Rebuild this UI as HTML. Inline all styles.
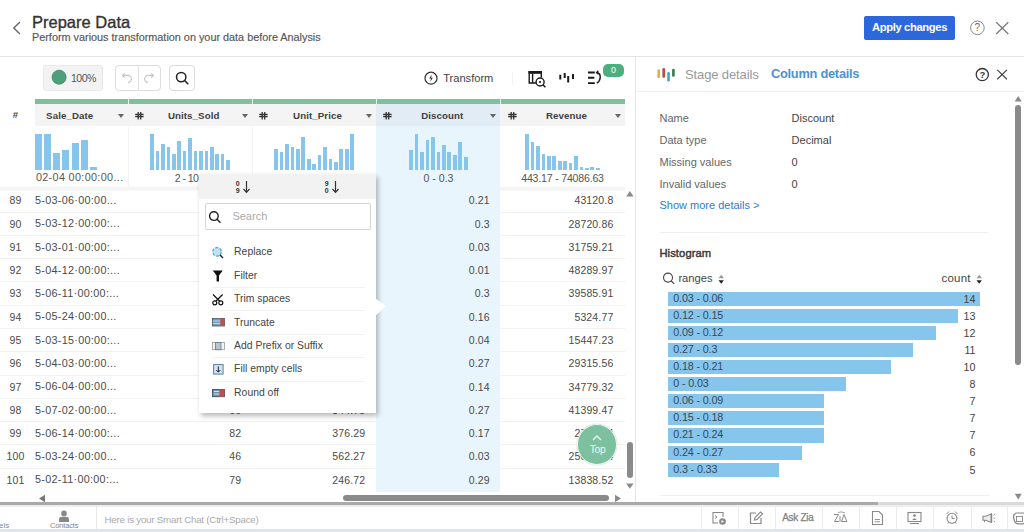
<!DOCTYPE html>
<html><head><meta charset="utf-8"><title>Prepare Data</title>
<style>
html,body{margin:0;padding:0;}
body{width:1024px;height:532px;overflow:hidden;position:relative;background:#fff;font-family:"Liberation Sans",sans-serif;}
.t{position:absolute;white-space:nowrap;}
.r{position:absolute;}
svg.r{overflow:visible;}
</style></head><body>

<div class="r" style="left:0.00px;top:56.00px;width:1024.00px;height:1.00px;background:#e4e4e4;"></div>
<svg class="r" style="left:0.00px;top:0.00px;" width="40" height="56" viewBox="0 0 40 56"><polyline points="19.5,22.5 13.8,28 19.5,33.5" fill="none" stroke="#666" stroke-width="1.4" stroke-linecap="round" stroke-linejoin="round"/></svg>
<div class="t" style="left:32.00px;top:13.78px;font-size:16.5px;line-height:16.5px;color:#333;font-weight:normal;-webkit-text-stroke:0.35px #333;">Prepare Data</div>
<div class="t" style="left:32.00px;top:32.32px;font-size:10.85px;line-height:10.85px;color:#555;font-weight:normal;-webkit-text-stroke:0.15px #555;">Perform various transformation on your data before Analysis</div>
<div class="r" style="left:864.00px;top:16.00px;width:91.00px;height:23.50px;background:#2d67dc;border-radius:2px;"></div>
<div class="t" style="left:849.50px;width:120px;text-align:center;top:21.92px;font-size:11.2px;line-height:11.2px;color:#fff;font-weight:bold;letter-spacing:-0.35px;">Apply changes</div>
<svg class="r" style="left:960.00px;top:10.00px;" width="60" height="36" viewBox="0 0 60 36"><circle cx="17.4" cy="17.8" r="6.8" fill="none" stroke="#888" stroke-width="1"/><text x="17.4" y="21.4" font-size="10" text-anchor="middle" fill="#666" font-family="Liberation Sans">?</text><path d="M36.2,12.2 L48.3,24 M48.3,12.2 L36.2,24" stroke="#777" stroke-width="1.2"/></svg>
<div class="r" style="left:43.00px;top:65.00px;width:60.00px;height:26.00px;background:#f3f3f3;border:1px solid #e9e9e9;border-radius:3px;box-sizing:border-box;"></div>
<svg class="r" style="left:50.00px;top:70.00px;" width="18" height="18" viewBox="0 0 18 18"><circle cx="9.1" cy="7.2" r="7" fill="#4f9f7c" stroke="#3f8566" stroke-width="0.8"/></svg>
<div class="t" style="left:71.00px;top:72.61px;font-size:10.5px;line-height:10.5px;color:#555;font-weight:normal;letter-spacing:-0.5px;">100%</div>
<div class="r" style="left:115.00px;top:65.00px;width:46.00px;height:26.00px;border:1px solid #dcdcdc;border-radius:4px;box-sizing:border-box;"></div>
<div class="r" style="left:138.00px;top:65.00px;width:1.00px;height:26.00px;background:#e2e2e2;"></div>
<svg class="r" style="left:115.00px;top:65.00px;" width="46" height="26" viewBox="0 0 46 26"><path d="M7.6,10.4 H12.6 A3.6,3.6 0 0 1 13,17.6" fill="none" stroke="#c4c4c4" stroke-width="1.1"/><path d="M9.7,8.3 L7.6,10.4 L9.7,12.5" fill="none" stroke="#c4c4c4" stroke-width="1.1"/><path d="M38.4,10.4 H33.4 A3.6,3.6 0 0 0 33,17.6" fill="none" stroke="#c4c4c4" stroke-width="1.1"/><path d="M36.3,8.3 L38.4,10.4 L36.3,12.5" fill="none" stroke="#c4c4c4" stroke-width="1.1"/></svg>
<div class="r" style="left:169.00px;top:65.00px;width:26.00px;height:26.00px;border:1px solid #dcdcdc;border-radius:4px;box-sizing:border-box;"></div>
<svg class="r" style="left:169.00px;top:65.00px;" width="26" height="26" viewBox="0 0 26 26"><circle cx="12.2" cy="12.1" r="4.7" fill="none" stroke="#222" stroke-width="1.5"/><path d="M15.6,15.5 L18.8,18.7" stroke="#222" stroke-width="1.6" stroke-linecap="round"/></svg>
<svg class="r" style="left:423.00px;top:70.00px;" width="16" height="16" viewBox="0 0 16 16"><circle cx="8" cy="8.2" r="6" fill="none" stroke="#333" stroke-width="1.2"/><path d="M8.8,4.6 L6.2,8.6 H8 L7.2,11.8 L9.9,7.8 H8.1 Z" fill="#333"/></svg>
<div class="t" style="left:443.20px;top:72.80px;font-size:11.1px;line-height:11.1px;color:#444;font-weight:normal;">Transform</div>
<div class="r" style="left:512.00px;top:72.00px;width:1.00px;height:13.00px;background:#f3f3f3;"></div>
<svg class="r" style="left:527.00px;top:70.00px;" width="22" height="20" viewBox="0 0 22 20"><rect x="1.5" y="1" width="13.5" height="2.8" fill="#1a1a1a"/><path d="M2.2,1 V13 H9 M14.3,1 V7.5 M5.6,3.5 V13" fill="none" stroke="#1a1a1a" stroke-width="1.4"/><circle cx="13.1" cy="12" r="4" fill="#fff" stroke="#1a1a1a" stroke-width="1.4"/><circle cx="13.1" cy="12" r="1.1" fill="#1a1a1a"/><path d="M15.9,14.8 L18.4,17.3" stroke="#1a1a1a" stroke-width="1.5"/></svg>
<svg class="r" style="left:558.00px;top:70.00px;" width="18" height="16" viewBox="0 0 18 16"><path d="M2.3,4.7 V9.4 M6.7,3 V8 M10.2,6 V12.5 M15,4 V9" stroke="#1a1a1a" stroke-width="2"/></svg>
<svg class="r" style="left:586.00px;top:70.00px;" width="18" height="16" viewBox="0 0 18 16"><path d="M2,2.5 H8.8 M2,7.8 H8.3 M2,13.1 H8.8" stroke="#1a1a1a" stroke-width="1.9"/><path d="M10.8,2.6 Q14.6,3.2 14.2,7.8 Q13.8,11.5 10.8,13.2" fill="none" stroke="#1a1a1a" stroke-width="1.5"/><path d="M12.3,0.8 L10.6,2.6 L12.6,4.2" fill="none" stroke="#1a1a1a" stroke-width="1.3"/></svg>
<div class="r" style="left:603.00px;top:63.60px;width:21.00px;height:13.70px;background:#4bb07e;border-radius:5px;"></div>
<div class="t" style="left:603.50px;width:20px;text-align:center;top:66.38px;font-size:9px;line-height:9px;color:#fff;font-weight:normal;">0</div>
<div class="r" style="left:35.00px;top:99.00px;width:590.00px;height:5.00px;background:#7fbf9c;"></div>
<div class="r" style="left:128.00px;top:99.00px;width:1.00px;height:5.00px;background:#e8f4ee;"></div>
<div class="r" style="left:252.00px;top:99.00px;width:1.00px;height:5.00px;background:#e8f4ee;"></div>
<div class="r" style="left:376.00px;top:99.00px;width:1.00px;height:5.00px;background:#e8f4ee;"></div>
<div class="r" style="left:500.00px;top:99.00px;width:1.00px;height:5.00px;background:#e8f4ee;"></div>
<div class="r" style="left:35.00px;top:104.00px;width:590.00px;height:22.00px;background:#f4f4f4;"></div>
<div class="r" style="left:376.00px;top:104.00px;width:124.00px;height:22.00px;background:#e1ecf5;"></div>
<div class="r" style="left:35.00px;top:125.50px;width:341.00px;height:1.00px;background:#ececec;"></div>
<div class="r" style="left:500.00px;top:125.50px;width:125.00px;height:1.00px;background:#ececec;"></div>
<div class="t" style="left:5.50px;width:20px;text-align:center;top:110.46px;font-size:9.5px;line-height:9.5px;color:#444;font-weight:bold;">#</div>
<div class="t" style="left:14.70px;width:110px;text-align:center;top:110.99px;font-size:9.7px;line-height:9.7px;color:#3f3f3f;font-weight:bold;letter-spacing:0.1px;">Sale_Date</div>
<div class="r" style="left:117.50px;top:114.3px;width:0;height:0;border-left:3.2px solid transparent;border-right:3.2px solid transparent;border-top:4.2px solid #666;"></div>
<div class="t" style="left:138.70px;width:110px;text-align:center;top:110.99px;font-size:9.7px;line-height:9.7px;color:#3f3f3f;font-weight:bold;letter-spacing:0.1px;">Units_Sold</div>
<div class="r" style="left:241.50px;top:114.3px;width:0;height:0;border-left:3.2px solid transparent;border-right:3.2px solid transparent;border-top:4.2px solid #666;"></div>
<svg class="r" style="left:135.00px;top:110.00px;" width="9" height="11" viewBox="0 0 9 11"><path d="M3.2,2 V9.6 M5.7,2 V9.6 M0.2,4.5 H8.6 M0.2,6.6 H8.6" stroke="#333" stroke-width="1.3"/></svg>
<div class="t" style="left:262.50px;width:110px;text-align:center;top:110.99px;font-size:9.7px;line-height:9.7px;color:#3f3f3f;font-weight:bold;letter-spacing:0.1px;">Unit_Price</div>
<div class="r" style="left:365.50px;top:114.3px;width:0;height:0;border-left:3.2px solid transparent;border-right:3.2px solid transparent;border-top:4.2px solid #666;"></div>
<svg class="r" style="left:259.00px;top:110.00px;" width="9" height="11" viewBox="0 0 9 11"><path d="M3.2,2 V9.6 M5.7,2 V9.6 M0.2,4.5 H8.6 M0.2,6.6 H8.6" stroke="#333" stroke-width="1.3"/></svg>
<div class="t" style="left:387.30px;width:110px;text-align:center;top:110.99px;font-size:9.7px;line-height:9.7px;color:#3f3f3f;font-weight:bold;letter-spacing:0.1px;">Discount</div>
<div class="r" style="left:489.50px;top:114.3px;width:0;height:0;border-left:3.2px solid transparent;border-right:3.2px solid transparent;border-top:4.2px solid #666;"></div>
<svg class="r" style="left:383.00px;top:110.00px;" width="9" height="11" viewBox="0 0 9 11"><path d="M3.2,2 V9.6 M5.7,2 V9.6 M0.2,4.5 H8.6 M0.2,6.6 H8.6" stroke="#333" stroke-width="1.3"/></svg>
<div class="t" style="left:511.50px;width:110px;text-align:center;top:110.99px;font-size:9.7px;line-height:9.7px;color:#3f3f3f;font-weight:bold;letter-spacing:0.1px;">Revenue</div>
<div class="r" style="left:614.50px;top:114.3px;width:0;height:0;border-left:3.2px solid transparent;border-right:3.2px solid transparent;border-top:4.2px solid #666;"></div>
<svg class="r" style="left:508.00px;top:110.00px;" width="9" height="11" viewBox="0 0 9 11"><path d="M3.2,2 V9.6 M5.7,2 V9.6 M0.2,4.5 H8.6 M0.2,6.6 H8.6" stroke="#333" stroke-width="1.3"/></svg>
<div class="r" style="left:35.00px;top:126.00px;width:590.00px;height:61.00px;background:#fff;"></div>
<div class="r" style="left:0.00px;top:185.50px;width:625.00px;height:5.00px;background:linear-gradient(#fafafa,#f3f3f3 50%,#fafafa);"></div>
<div class="r" style="left:376.00px;top:126.00px;width:124.00px;height:365.50px;background:#e8f5fd;"></div>
<div class="r" style="left:128.00px;top:127.00px;width:1.00px;height:60.00px;background:#f3f3f3;"></div>
<div class="r" style="left:252.00px;top:127.00px;width:1.00px;height:60.00px;background:#f3f3f3;"></div>
<div class="r" style="left:34.60px;top:134.30px;width:7.00px;height:35.50px;background:#86c6ec;"></div>
<div class="r" style="left:43.85px;top:134.30px;width:7.00px;height:35.50px;background:#86c6ec;"></div>
<div class="r" style="left:53.10px;top:153.40px;width:7.00px;height:16.40px;background:#86c6ec;"></div>
<div class="r" style="left:62.35px;top:150.00px;width:7.00px;height:19.80px;background:#86c6ec;"></div>
<div class="r" style="left:71.60px;top:142.80px;width:7.00px;height:27.00px;background:#86c6ec;"></div>
<div class="r" style="left:80.85px;top:139.90px;width:7.00px;height:29.90px;background:#86c6ec;"></div>
<div class="r" style="left:90.10px;top:166.50px;width:7.00px;height:3.30px;background:#86c6ec;"></div>
<div class="r" style="left:150.25px;top:134.30px;width:3.70px;height:35.50px;background:#86c6ec;"></div>
<div class="r" style="left:155.68px;top:151.10px;width:3.70px;height:18.70px;background:#86c6ec;"></div>
<div class="r" style="left:161.10px;top:144.10px;width:3.70px;height:25.70px;background:#86c6ec;"></div>
<div class="r" style="left:166.53px;top:147.20px;width:3.70px;height:22.60px;background:#86c6ec;"></div>
<div class="r" style="left:171.95px;top:154.20px;width:3.70px;height:15.60px;background:#86c6ec;"></div>
<div class="r" style="left:177.38px;top:141.00px;width:3.70px;height:28.80px;background:#86c6ec;"></div>
<div class="r" style="left:182.80px;top:151.10px;width:3.70px;height:18.70px;background:#86c6ec;"></div>
<div class="r" style="left:188.22px;top:138.10px;width:3.70px;height:31.70px;background:#86c6ec;"></div>
<div class="r" style="left:193.65px;top:151.10px;width:3.70px;height:18.70px;background:#86c6ec;"></div>
<div class="r" style="left:199.07px;top:151.10px;width:3.70px;height:18.70px;background:#86c6ec;"></div>
<div class="r" style="left:204.50px;top:151.10px;width:3.70px;height:18.70px;background:#86c6ec;"></div>
<div class="r" style="left:209.93px;top:147.20px;width:3.70px;height:22.60px;background:#86c6ec;"></div>
<div class="r" style="left:215.35px;top:154.20px;width:3.70px;height:15.60px;background:#86c6ec;"></div>
<div class="r" style="left:220.77px;top:154.20px;width:3.70px;height:15.60px;background:#86c6ec;"></div>
<div class="r" style="left:226.20px;top:160.00px;width:3.70px;height:9.80px;background:#86c6ec;"></div>
<div class="r" style="left:274.30px;top:149.00px;width:3.70px;height:20.80px;background:#86c6ec;"></div>
<div class="r" style="left:279.73px;top:151.90px;width:3.70px;height:17.90px;background:#86c6ec;"></div>
<div class="r" style="left:285.15px;top:143.80px;width:3.70px;height:26.00px;background:#86c6ec;"></div>
<div class="r" style="left:290.57px;top:146.80px;width:3.70px;height:23.00px;background:#86c6ec;"></div>
<div class="r" style="left:296.00px;top:149.00px;width:3.70px;height:20.80px;background:#86c6ec;"></div>
<div class="r" style="left:301.43px;top:137.30px;width:3.70px;height:32.50px;background:#86c6ec;"></div>
<div class="r" style="left:306.85px;top:158.80px;width:3.70px;height:11.00px;background:#86c6ec;"></div>
<div class="r" style="left:312.28px;top:163.90px;width:3.70px;height:5.90px;background:#86c6ec;"></div>
<div class="r" style="left:317.70px;top:155.30px;width:3.70px;height:14.50px;background:#86c6ec;"></div>
<div class="r" style="left:323.12px;top:146.80px;width:3.70px;height:23.00px;background:#86c6ec;"></div>
<div class="r" style="left:328.55px;top:158.80px;width:3.70px;height:11.00px;background:#86c6ec;"></div>
<div class="r" style="left:333.98px;top:162.00px;width:3.70px;height:7.80px;background:#86c6ec;"></div>
<div class="r" style="left:339.40px;top:149.00px;width:3.70px;height:20.80px;background:#86c6ec;"></div>
<div class="r" style="left:344.82px;top:149.00px;width:3.70px;height:20.80px;background:#86c6ec;"></div>
<div class="r" style="left:350.25px;top:134.20px;width:3.70px;height:35.60px;background:#86c6ec;"></div>
<div class="r" style="left:409.20px;top:150.00px;width:3.80px;height:19.80px;background:#86c6ec;"></div>
<div class="r" style="left:414.66px;top:134.20px;width:3.80px;height:35.60px;background:#86c6ec;"></div>
<div class="r" style="left:420.12px;top:151.90px;width:3.80px;height:17.90px;background:#86c6ec;"></div>
<div class="r" style="left:425.58px;top:139.90px;width:3.80px;height:29.90px;background:#86c6ec;"></div>
<div class="r" style="left:431.04px;top:136.80px;width:3.80px;height:33.00px;background:#86c6ec;"></div>
<div class="r" style="left:436.50px;top:151.90px;width:3.80px;height:17.90px;background:#86c6ec;"></div>
<div class="r" style="left:441.96px;top:145.10px;width:3.80px;height:24.70px;background:#86c6ec;"></div>
<div class="r" style="left:447.42px;top:151.90px;width:3.80px;height:17.90px;background:#86c6ec;"></div>
<div class="r" style="left:452.88px;top:154.90px;width:3.80px;height:14.90px;background:#86c6ec;"></div>
<div class="r" style="left:458.34px;top:142.40px;width:3.80px;height:27.40px;background:#86c6ec;"></div>
<div class="r" style="left:463.80px;top:157.00px;width:3.80px;height:12.80px;background:#86c6ec;"></div>
<div class="r" style="left:525.25px;top:134.20px;width:3.70px;height:35.60px;background:#86c6ec;"></div>
<div class="r" style="left:530.68px;top:142.00px;width:3.70px;height:27.80px;background:#86c6ec;"></div>
<div class="r" style="left:536.11px;top:146.10px;width:3.70px;height:23.70px;background:#86c6ec;"></div>
<div class="r" style="left:541.54px;top:153.60px;width:3.70px;height:16.20px;background:#86c6ec;"></div>
<div class="r" style="left:546.97px;top:155.50px;width:3.70px;height:14.30px;background:#86c6ec;"></div>
<div class="r" style="left:552.40px;top:155.50px;width:3.70px;height:14.30px;background:#86c6ec;"></div>
<div class="r" style="left:557.83px;top:161.00px;width:3.70px;height:8.80px;background:#86c6ec;"></div>
<div class="r" style="left:563.26px;top:161.00px;width:3.70px;height:8.80px;background:#86c6ec;"></div>
<div class="r" style="left:568.69px;top:162.70px;width:3.70px;height:7.10px;background:#86c6ec;"></div>
<div class="r" style="left:574.12px;top:155.50px;width:3.70px;height:14.30px;background:#86c6ec;"></div>
<div class="r" style="left:579.55px;top:166.80px;width:3.70px;height:3.00px;background:#86c6ec;"></div>
<div class="r" style="left:584.98px;top:168.00px;width:3.70px;height:1.80px;background:#86c6ec;"></div>
<div class="r" style="left:590.41px;top:166.60px;width:3.70px;height:3.20px;background:#86c6ec;"></div>
<div class="r" style="left:595.84px;top:167.80px;width:3.70px;height:2.00px;background:#86c6ec;"></div>
<div class="t" style="left:35.90px;top:172.36px;font-size:10.8px;line-height:10.8px;color:#555;font-weight:normal;letter-spacing:0.35px;">02-04 00:00:00...</div>
<div class="t" style="left:136.60px;width:100px;text-align:center;top:172.53px;font-size:10.6px;line-height:10.6px;color:#555;font-weight:normal;letter-spacing:-0.6px;">2 - 10</div>
<div class="t" style="left:388.50px;width:100px;text-align:center;top:172.53px;font-size:10.6px;line-height:10.6px;color:#555;font-weight:normal;">0 - 0.3</div>
<div class="t" style="left:500.50px;width:124px;text-align:center;top:172.53px;font-size:10.6px;line-height:10.6px;color:#555;font-weight:normal;letter-spacing:-0.2px;">443.17 - 74086.63</div>
<div class="r" style="left:0.00px;top:211.67px;width:376.00px;height:1.00px;background:#f1f1f1;"></div>
<div class="r" style="left:500.00px;top:211.67px;width:125.00px;height:1.00px;background:#f1f1f1;"></div>
<div class="t" style="left:0.50px;width:30px;text-align:center;top:195.35px;font-size:10.5px;line-height:10.5px;color:#4a4a4a;font-weight:normal;letter-spacing:0.15px;">89</div>
<div class="t" style="left:35.00px;top:195.09px;font-size:10.8px;line-height:10.8px;color:#4a4a4a;font-weight:normal;letter-spacing:0.3px;">5-03-06·00:00...</div>
<div class="t" style="right:534.20px;top:195.35px;font-size:10.5px;line-height:10.5px;color:#4a4a4a;font-weight:normal;letter-spacing:0.15px;">0.21</div>
<div class="t" style="right:410.60px;top:195.35px;font-size:10.5px;line-height:10.5px;color:#4a4a4a;font-weight:normal;letter-spacing:0.15px;">43120.8</div>
<div class="r" style="left:0.00px;top:234.94px;width:376.00px;height:1.00px;background:#f1f1f1;"></div>
<div class="r" style="left:500.00px;top:234.94px;width:125.00px;height:1.00px;background:#f1f1f1;"></div>
<div class="t" style="left:0.50px;width:30px;text-align:center;top:218.62px;font-size:10.5px;line-height:10.5px;color:#4a4a4a;font-weight:normal;letter-spacing:0.15px;">90</div>
<div class="t" style="left:35.00px;top:218.36px;font-size:10.8px;line-height:10.8px;color:#4a4a4a;font-weight:normal;letter-spacing:0.3px;">5-03-12·00:00:...</div>
<div class="t" style="right:534.20px;top:218.62px;font-size:10.5px;line-height:10.5px;color:#4a4a4a;font-weight:normal;letter-spacing:0.15px;">0.3</div>
<div class="t" style="right:410.60px;top:218.62px;font-size:10.5px;line-height:10.5px;color:#4a4a4a;font-weight:normal;letter-spacing:0.15px;">28720.86</div>
<div class="r" style="left:0.00px;top:258.21px;width:376.00px;height:1.00px;background:#f1f1f1;"></div>
<div class="r" style="left:500.00px;top:258.21px;width:125.00px;height:1.00px;background:#f1f1f1;"></div>
<div class="t" style="left:0.50px;width:30px;text-align:center;top:241.89px;font-size:10.5px;line-height:10.5px;color:#4a4a4a;font-weight:normal;letter-spacing:0.15px;">91</div>
<div class="t" style="left:35.00px;top:241.63px;font-size:10.8px;line-height:10.8px;color:#4a4a4a;font-weight:normal;letter-spacing:0.3px;">5-03-01·00:00:...</div>
<div class="t" style="right:534.20px;top:241.89px;font-size:10.5px;line-height:10.5px;color:#4a4a4a;font-weight:normal;letter-spacing:0.15px;">0.03</div>
<div class="t" style="right:410.60px;top:241.89px;font-size:10.5px;line-height:10.5px;color:#4a4a4a;font-weight:normal;letter-spacing:0.15px;">31759.21</div>
<div class="r" style="left:0.00px;top:281.48px;width:376.00px;height:1.00px;background:#f1f1f1;"></div>
<div class="r" style="left:500.00px;top:281.48px;width:125.00px;height:1.00px;background:#f1f1f1;"></div>
<div class="t" style="left:0.50px;width:30px;text-align:center;top:265.16px;font-size:10.5px;line-height:10.5px;color:#4a4a4a;font-weight:normal;letter-spacing:0.15px;">92</div>
<div class="t" style="left:35.00px;top:264.90px;font-size:10.8px;line-height:10.8px;color:#4a4a4a;font-weight:normal;letter-spacing:0.3px;">5-04-12·00:00:...</div>
<div class="t" style="right:534.20px;top:265.16px;font-size:10.5px;line-height:10.5px;color:#4a4a4a;font-weight:normal;letter-spacing:0.15px;">0.01</div>
<div class="t" style="right:410.60px;top:265.16px;font-size:10.5px;line-height:10.5px;color:#4a4a4a;font-weight:normal;letter-spacing:0.15px;">48289.97</div>
<div class="r" style="left:0.00px;top:304.75px;width:376.00px;height:1.00px;background:#f1f1f1;"></div>
<div class="r" style="left:500.00px;top:304.75px;width:125.00px;height:1.00px;background:#f1f1f1;"></div>
<div class="t" style="left:0.50px;width:30px;text-align:center;top:288.43px;font-size:10.5px;line-height:10.5px;color:#4a4a4a;font-weight:normal;letter-spacing:0.15px;">93</div>
<div class="t" style="left:35.00px;top:288.17px;font-size:10.8px;line-height:10.8px;color:#4a4a4a;font-weight:normal;letter-spacing:0.3px;">5-06-11·00:00:...</div>
<div class="t" style="right:534.20px;top:288.43px;font-size:10.5px;line-height:10.5px;color:#4a4a4a;font-weight:normal;letter-spacing:0.15px;">0.3</div>
<div class="t" style="right:410.60px;top:288.43px;font-size:10.5px;line-height:10.5px;color:#4a4a4a;font-weight:normal;letter-spacing:0.15px;">39585.91</div>
<div class="r" style="left:0.00px;top:328.02px;width:376.00px;height:1.00px;background:#f1f1f1;"></div>
<div class="r" style="left:500.00px;top:328.02px;width:125.00px;height:1.00px;background:#f1f1f1;"></div>
<div class="t" style="left:0.50px;width:30px;text-align:center;top:311.70px;font-size:10.5px;line-height:10.5px;color:#4a4a4a;font-weight:normal;letter-spacing:0.15px;">94</div>
<div class="t" style="left:35.00px;top:311.44px;font-size:10.8px;line-height:10.8px;color:#4a4a4a;font-weight:normal;letter-spacing:0.3px;">5-05-24·00:00...</div>
<div class="t" style="right:534.20px;top:311.70px;font-size:10.5px;line-height:10.5px;color:#4a4a4a;font-weight:normal;letter-spacing:0.15px;">0.16</div>
<div class="t" style="right:410.60px;top:311.70px;font-size:10.5px;line-height:10.5px;color:#4a4a4a;font-weight:normal;letter-spacing:0.15px;">5324.77</div>
<div class="r" style="left:0.00px;top:351.29px;width:376.00px;height:1.00px;background:#f1f1f1;"></div>
<div class="r" style="left:500.00px;top:351.29px;width:125.00px;height:1.00px;background:#f1f1f1;"></div>
<div class="t" style="left:0.50px;width:30px;text-align:center;top:334.97px;font-size:10.5px;line-height:10.5px;color:#4a4a4a;font-weight:normal;letter-spacing:0.15px;">95</div>
<div class="t" style="left:35.00px;top:334.71px;font-size:10.8px;line-height:10.8px;color:#4a4a4a;font-weight:normal;letter-spacing:0.3px;">5-03-15·00:00:...</div>
<div class="t" style="right:534.20px;top:334.97px;font-size:10.5px;line-height:10.5px;color:#4a4a4a;font-weight:normal;letter-spacing:0.15px;">0.04</div>
<div class="t" style="right:410.60px;top:334.97px;font-size:10.5px;line-height:10.5px;color:#4a4a4a;font-weight:normal;letter-spacing:0.15px;">15447.23</div>
<div class="r" style="left:0.00px;top:374.56px;width:376.00px;height:1.00px;background:#f1f1f1;"></div>
<div class="r" style="left:500.00px;top:374.56px;width:125.00px;height:1.00px;background:#f1f1f1;"></div>
<div class="t" style="left:0.50px;width:30px;text-align:center;top:358.24px;font-size:10.5px;line-height:10.5px;color:#4a4a4a;font-weight:normal;letter-spacing:0.15px;">96</div>
<div class="t" style="left:35.00px;top:357.98px;font-size:10.8px;line-height:10.8px;color:#4a4a4a;font-weight:normal;letter-spacing:0.3px;">5-04-03·00:00...</div>
<div class="t" style="right:534.20px;top:358.24px;font-size:10.5px;line-height:10.5px;color:#4a4a4a;font-weight:normal;letter-spacing:0.15px;">0.27</div>
<div class="t" style="right:410.60px;top:358.24px;font-size:10.5px;line-height:10.5px;color:#4a4a4a;font-weight:normal;letter-spacing:0.15px;">29315.56</div>
<div class="r" style="left:0.00px;top:397.83px;width:376.00px;height:1.00px;background:#f1f1f1;"></div>
<div class="r" style="left:500.00px;top:397.83px;width:125.00px;height:1.00px;background:#f1f1f1;"></div>
<div class="t" style="left:0.50px;width:30px;text-align:center;top:381.51px;font-size:10.5px;line-height:10.5px;color:#4a4a4a;font-weight:normal;letter-spacing:0.15px;">97</div>
<div class="t" style="left:35.00px;top:381.25px;font-size:10.8px;line-height:10.8px;color:#4a4a4a;font-weight:normal;letter-spacing:0.3px;">5-06-04·00:00...</div>
<div class="t" style="right:534.20px;top:381.51px;font-size:10.5px;line-height:10.5px;color:#4a4a4a;font-weight:normal;letter-spacing:0.15px;">0.14</div>
<div class="t" style="right:410.60px;top:381.51px;font-size:10.5px;line-height:10.5px;color:#4a4a4a;font-weight:normal;letter-spacing:0.15px;">34779.32</div>
<div class="r" style="left:0.00px;top:421.10px;width:376.00px;height:1.00px;background:#f1f1f1;"></div>
<div class="r" style="left:500.00px;top:421.10px;width:125.00px;height:1.00px;background:#f1f1f1;"></div>
<div class="t" style="left:0.50px;width:30px;text-align:center;top:404.78px;font-size:10.5px;line-height:10.5px;color:#4a4a4a;font-weight:normal;letter-spacing:0.15px;">98</div>
<div class="t" style="left:35.00px;top:404.52px;font-size:10.8px;line-height:10.8px;color:#4a4a4a;font-weight:normal;letter-spacing:0.3px;">5-07-02·00:00...</div>
<div class="t" style="right:782.70px;top:404.78px;font-size:10.5px;line-height:10.5px;color:#4a4a4a;font-weight:normal;letter-spacing:0.15px;">66</div>
<div class="t" style="right:658.70px;top:404.78px;font-size:10.5px;line-height:10.5px;color:#4a4a4a;font-weight:normal;letter-spacing:0.15px;">344.75</div>
<div class="t" style="right:534.20px;top:404.78px;font-size:10.5px;line-height:10.5px;color:#4a4a4a;font-weight:normal;letter-spacing:0.15px;">0.27</div>
<div class="t" style="right:410.60px;top:404.78px;font-size:10.5px;line-height:10.5px;color:#4a4a4a;font-weight:normal;letter-spacing:0.15px;">41399.47</div>
<div class="r" style="left:0.00px;top:444.37px;width:376.00px;height:1.00px;background:#f1f1f1;"></div>
<div class="r" style="left:500.00px;top:444.37px;width:125.00px;height:1.00px;background:#f1f1f1;"></div>
<div class="t" style="left:0.50px;width:30px;text-align:center;top:428.05px;font-size:10.5px;line-height:10.5px;color:#4a4a4a;font-weight:normal;letter-spacing:0.15px;">99</div>
<div class="t" style="left:35.00px;top:427.79px;font-size:10.8px;line-height:10.8px;color:#4a4a4a;font-weight:normal;letter-spacing:0.3px;">5-06-14·00:00:...</div>
<div class="t" style="right:782.70px;top:428.05px;font-size:10.5px;line-height:10.5px;color:#4a4a4a;font-weight:normal;letter-spacing:0.15px;">82</div>
<div class="t" style="right:658.70px;top:428.05px;font-size:10.5px;line-height:10.5px;color:#4a4a4a;font-weight:normal;letter-spacing:0.15px;">376.29</div>
<div class="t" style="right:534.20px;top:428.05px;font-size:10.5px;line-height:10.5px;color:#4a4a4a;font-weight:normal;letter-spacing:0.15px;">0.17</div>
<div class="t" style="right:410.60px;top:428.05px;font-size:10.5px;line-height:10.5px;color:#4a4a4a;font-weight:normal;letter-spacing:0.15px;">27507.4</div>
<div class="r" style="left:0.00px;top:467.64px;width:376.00px;height:1.00px;background:#f1f1f1;"></div>
<div class="r" style="left:500.00px;top:467.64px;width:125.00px;height:1.00px;background:#f1f1f1;"></div>
<div class="t" style="left:0.50px;width:30px;text-align:center;top:451.32px;font-size:10.5px;line-height:10.5px;color:#4a4a4a;font-weight:normal;letter-spacing:0.15px;">100</div>
<div class="t" style="left:35.00px;top:451.06px;font-size:10.8px;line-height:10.8px;color:#4a4a4a;font-weight:normal;letter-spacing:0.3px;">5-03-24·00:00...</div>
<div class="t" style="right:782.70px;top:451.32px;font-size:10.5px;line-height:10.5px;color:#4a4a4a;font-weight:normal;letter-spacing:0.15px;">46</div>
<div class="t" style="right:658.70px;top:451.32px;font-size:10.5px;line-height:10.5px;color:#4a4a4a;font-weight:normal;letter-spacing:0.15px;">562.27</div>
<div class="t" style="right:534.20px;top:451.32px;font-size:10.5px;line-height:10.5px;color:#4a4a4a;font-weight:normal;letter-spacing:0.15px;">0.03</div>
<div class="t" style="right:410.60px;top:451.32px;font-size:10.5px;line-height:10.5px;color:#4a4a4a;font-weight:normal;letter-spacing:0.15px;">25018.64</div>
<div class="t" style="left:0.50px;width:30px;text-align:center;top:474.59px;font-size:10.5px;line-height:10.5px;color:#4a4a4a;font-weight:normal;letter-spacing:0.15px;">101</div>
<div class="t" style="left:35.00px;top:474.33px;font-size:10.8px;line-height:10.8px;color:#4a4a4a;font-weight:normal;letter-spacing:0.3px;">5-02-11·00:00:...</div>
<div class="t" style="right:782.70px;top:474.59px;font-size:10.5px;line-height:10.5px;color:#4a4a4a;font-weight:normal;letter-spacing:0.15px;">79</div>
<div class="t" style="right:658.70px;top:474.59px;font-size:10.5px;line-height:10.5px;color:#4a4a4a;font-weight:normal;letter-spacing:0.15px;">246.72</div>
<div class="t" style="right:534.20px;top:474.59px;font-size:10.5px;line-height:10.5px;color:#4a4a4a;font-weight:normal;letter-spacing:0.15px;">0.29</div>
<div class="t" style="right:410.60px;top:474.59px;font-size:10.5px;line-height:10.5px;color:#4a4a4a;font-weight:normal;letter-spacing:0.15px;">13838.52</div>
<svg class="r" style="left:626.00px;top:190.00px;" width="8" height="7" viewBox="0 0 8 7"><path d="M0.3,6.5 L3.8,1 L7.6,6.5 Z" fill="#8a8a8a"/></svg>
<div class="r" style="left:627.00px;top:442.00px;width:6.20px;height:35.50px;background:#8a8a8a;border-radius:3px;"></div>
<svg class="r" style="left:626.00px;top:483.00px;" width="8" height="7" viewBox="0 0 8 7"><path d="M0.3,0.5 L3.8,5.8 L7.6,0.5 Z" fill="#8a8a8a"/></svg>
<svg class="r" style="left:38.00px;top:494.00px;" width="8" height="9" viewBox="0 0 8 9"><path d="M7,0.8 L1,4.5 L7,8.2 Z" fill="#777"/></svg>
<div class="r" style="left:343.00px;top:495.30px;width:266.00px;height:5.70px;background:#8a8a8a;border-radius:3px;"></div>
<svg class="r" style="left:614.00px;top:494.00px;" width="8" height="9" viewBox="0 0 8 9"><path d="M1,0.8 L7,4.5 L1,8.2 Z" fill="#8a8a8a"/></svg>
<div class="r" style="left:576.80px;top:424.30px;width:40.50px;height:40.70px;background:#7cc0a0;border-radius:50%;border:1.4px solid #eef8f3;box-sizing:border-box;box-shadow:0 0 1.5px rgba(0,0,0,0.25);"></div>
<svg class="r" style="left:590.00px;top:433.00px;" width="14" height="9" viewBox="0 0 14 9"><polyline points="3,7 7,3 11,7" fill="none" stroke="#eef9f3" stroke-width="1.3"/></svg>
<div class="t" style="left:577.50px;width:40px;text-align:center;top:445.28px;font-size:10.3px;line-height:10.3px;color:#eef9f3;font-weight:normal;letter-spacing:-0.3px;">Top</div>
<div class="r" style="left:198.7px;top:174.2px;width:177.6px;height:238.5px;background:#fff;box-shadow:2px 3px 5px rgba(0,0,0,0.28);"></div>
<div class="r" style="left:198.70px;top:174.20px;width:177.60px;height:25.10px;background:#f2f2f2;"></div>
<svg class="r" style="left:234.00px;top:178.00px;" width="18" height="18" viewBox="0 0 18 18"><text x="3.8" y="7.6" font-size="7" font-weight="bold" text-anchor="middle" fill="#333" font-family="Liberation Sans">0</text><text x="3.8" y="14.5" font-size="7" font-weight="bold" text-anchor="middle" fill="#333" font-family="Liberation Sans">9</text><path d="M12.5,3 V14 M9.5,11 L12.5,14.3 L15.5,11" fill="none" stroke="#333" stroke-width="1.2"/></svg>
<svg class="r" style="left:323.00px;top:178.00px;" width="18" height="18" viewBox="0 0 18 18"><text x="3.8" y="7.6" font-size="7" font-weight="bold" text-anchor="middle" fill="#333" font-family="Liberation Sans">9</text><text x="3.8" y="14.5" font-size="7" font-weight="bold" text-anchor="middle" fill="#333" font-family="Liberation Sans">0</text><path d="M12.5,3 V14 M9.5,11 L12.5,14.3 L15.5,11" fill="none" stroke="#333" stroke-width="1.2"/></svg>
<div class="r" style="left:204.50px;top:203.20px;width:166.00px;height:26.90px;border:1px solid #d4d4d4;border-radius:2px;box-sizing:border-box;background:#fff;"></div>
<svg class="r" style="left:208.00px;top:210.00px;" width="14" height="14" viewBox="0 0 14 14"><circle cx="5.9" cy="6.1" r="4.3" fill="none" stroke="#222" stroke-width="1.4"/><path d="M9,9.3 L12,12.3" stroke="#222" stroke-width="1.5" stroke-linecap="round"/></svg>
<div class="t" style="left:232.40px;top:210.89px;font-size:11px;line-height:11px;color:#aaa;font-weight:normal;">Search</div>
<div class="t" style="left:234.10px;top:247.40px;font-size:10.4px;line-height:10.4px;color:#444;font-weight:normal;">Replace</div>
<div class="t" style="left:234.10px;top:270.80px;font-size:10.4px;line-height:10.4px;color:#444;font-weight:normal;">Filter</div>
<div class="r" style="left:212.00px;top:286.90px;width:153.00px;height:1.00px;background:#f2f2f2;"></div>
<div class="t" style="left:234.10px;top:294.20px;font-size:10.4px;line-height:10.4px;color:#444;font-weight:normal;">Trim spaces</div>
<div class="r" style="left:212.00px;top:310.30px;width:153.00px;height:1.00px;background:#f2f2f2;"></div>
<div class="t" style="left:234.10px;top:317.60px;font-size:10.4px;line-height:10.4px;color:#444;font-weight:normal;">Truncate</div>
<div class="r" style="left:212.00px;top:333.70px;width:153.00px;height:1.00px;background:#f2f2f2;"></div>
<div class="t" style="left:234.10px;top:341.00px;font-size:10.4px;line-height:10.4px;color:#444;font-weight:normal;">Add Prefix or Suffix</div>
<div class="r" style="left:212.00px;top:357.10px;width:153.00px;height:1.00px;background:#f2f2f2;"></div>
<div class="t" style="left:234.10px;top:364.40px;font-size:10.4px;line-height:10.4px;color:#444;font-weight:normal;">Fill empty cells</div>
<div class="r" style="left:212.00px;top:380.50px;width:153.00px;height:1.00px;background:#f2f2f2;"></div>
<div class="t" style="left:234.10px;top:387.80px;font-size:10.4px;line-height:10.4px;color:#444;font-weight:normal;">Round off</div>
<svg class="r" style="left:211.00px;top:246.00px;" width="14" height="13" viewBox="0 0 14 13"><circle cx="6" cy="5.8" r="4.3" fill="#bfe3f5" stroke="#5aa8d6" stroke-width="1.3" stroke-dasharray="3 1.5"/><path d="M8.8,8.8 L12,12" stroke="#222" stroke-width="1.5"/></svg>
<svg class="r" style="left:212.00px;top:270.00px;" width="12" height="12" viewBox="0 0 12 12"><path d="M0.8,0.5 H10.8 L7,5.5 V11.5 L4.6,11.5 V5.5 Z" fill="#111"/></svg>
<svg class="r" style="left:212.00px;top:293.50px;" width="12" height="12" viewBox="0 0 12 12"><circle cx="2.8" cy="8.8" r="2" fill="none" stroke="#111" stroke-width="1.2"/><circle cx="8.8" cy="8.8" r="2" fill="none" stroke="#111" stroke-width="1.2"/><path d="M1,0.5 L8,7.5 M10.6,0.5 L3.6,7.5" stroke="#111" stroke-width="1.2"/></svg>
<svg class="r" style="left:211.50px;top:318.00px;" width="13" height="9" viewBox="0 0 13 9"><rect x="0.5" y="0.5" width="12" height="7.5" fill="#7a9bb5" stroke="#456" stroke-width="0.8"/><rect x="8.5" y="0.5" width="4" height="7.5" fill="#c0504d"/><path d="M1,3 H8 M1,5.5 H8" stroke="#dde" stroke-width="0.8"/></svg>
<svg class="r" style="left:211.50px;top:341.80px;" width="13" height="9" viewBox="0 0 13 9"><rect x="0.5" y="0.5" width="12" height="7.2" fill="#f4f4f4" stroke="#999" stroke-width="0.8"/><rect x="3.5" y="0.5" width="5.5" height="7.2" fill="#b8c6d2" stroke="#678" stroke-width="0.8"/></svg>
<svg class="r" style="left:212.50px;top:364.00px;" width="11" height="11" viewBox="0 0 11 11"><rect x="0.6" y="0.6" width="9.5" height="9.5" fill="#cfe6f7" stroke="#5a7f99" stroke-width="1"/><path d="M5.35,2.5 V8 M3.3,6 L5.35,8.2 L7.4,6" fill="none" stroke="#223" stroke-width="1"/></svg>
<svg class="r" style="left:211.50px;top:388.50px;" width="13" height="9" viewBox="0 0 13 9"><rect x="0.5" y="0.5" width="12" height="7.2" fill="#6f8ea8" stroke="#345" stroke-width="0.8"/><rect x="8" y="0.5" width="4.5" height="7.2" fill="#c24a4a"/><path d="M2,2.5 H7 M2,5 H7" stroke="#e7eef5" stroke-width="0.9"/></svg>
<svg class="r" style="left:375.00px;top:297.00px;" width="12" height="20" viewBox="0 0 12 20"><path d="M0.5,1.4 L11,9.3 L0.5,18.5 Z" fill="#fff"/></svg>
<div class="r" style="left:635.00px;top:57.00px;width:389.00px;height:445.00px;background:#fff;"></div>
<div class="r" style="left:635.00px;top:57.00px;width:1.00px;height:445.00px;background:#e6e6e6;"></div>
<svg class="r" style="left:656.00px;top:68.00px;" width="20" height="14" viewBox="0 0 20 14"><path d="M2.75,2.5 V8.8" stroke="#dcae55" stroke-width="2.7" stroke-linecap="round"/><path d="M7.75,1.3 V8.4" stroke="#b34e47" stroke-width="2.7" stroke-linecap="round"/><path d="M12.55,5.3 V12.2" stroke="#3ea9b9" stroke-width="2.6" stroke-linecap="round"/><path d="M17.4,2.2 V7.5" stroke="#3f7d50" stroke-width="2.7" stroke-linecap="round"/></svg>
<div class="t" style="left:685.00px;top:67.60px;font-size:13px;line-height:13px;color:#9a9a9a;font-weight:normal;letter-spacing:-0.12px;">Stage details</div>
<div class="t" style="left:771.00px;top:67.76px;font-size:12.8px;line-height:12.8px;color:#4d92d2;font-weight:bold;letter-spacing:-0.25px;">Column details</div>
<svg class="r" style="left:970.00px;top:62.00px;" width="40" height="26" viewBox="0 0 40 26"><circle cx="12.3" cy="12.6" r="6.1" fill="none" stroke="#333" stroke-width="1.3"/><text x="12.3" y="16" font-size="9.5" font-weight="bold" text-anchor="middle" fill="#333" font-family="Liberation Sans">?</text><path d="M27.3,7.9 L36.9,17.3 M36.9,7.9 L27.3,17.3" stroke="#444" stroke-width="1.2"/></svg>
<div class="r" style="left:636.00px;top:90.50px;width:388.00px;height:1.00px;background:#efefef;"></div>
<svg class="r" style="left:1014.00px;top:95.00px;" width="9" height="8" viewBox="0 0 9 8"><path d="M0.7,6.6 L4.2,1 L7.8,6.6 Z" fill="#8a8a8a"/></svg>
<div class="r" style="left:1015.00px;top:105.00px;width:6.20px;height:260.00px;background:#8a8a8a;border-radius:3px;"></div>
<svg class="r" style="left:1014.00px;top:493.00px;" width="9" height="8" viewBox="0 0 9 8"><path d="M0.7,0.8 L4.2,6.4 L7.8,0.8 Z" fill="#8a8a8a"/></svg>
<div class="t" style="left:659.50px;top:113.19px;font-size:11px;line-height:11px;color:#666;font-weight:normal;">Name</div>
<div class="t" style="left:791.60px;top:113.19px;font-size:11px;line-height:11px;color:#444;font-weight:normal;">Discount</div>
<div class="t" style="left:659.50px;top:134.99px;font-size:11px;line-height:11px;color:#666;font-weight:normal;">Data type</div>
<div class="t" style="left:791.60px;top:134.99px;font-size:11px;line-height:11px;color:#444;font-weight:normal;">Decimal</div>
<div class="t" style="left:659.50px;top:156.79px;font-size:11px;line-height:11px;color:#666;font-weight:normal;">Missing values</div>
<div class="t" style="left:791.60px;top:156.79px;font-size:11px;line-height:11px;color:#444;font-weight:normal;">0</div>
<div class="t" style="left:659.50px;top:178.59px;font-size:11px;line-height:11px;color:#666;font-weight:normal;">Invalid values</div>
<div class="t" style="left:791.60px;top:178.59px;font-size:11px;line-height:11px;color:#444;font-weight:normal;">0</div>
<div class="t" style="left:659.50px;top:200.39px;font-size:11px;line-height:11px;color:#2f7bd0;font-weight:normal;">Show more details &gt;</div>
<div class="r" style="left:660.00px;top:231.50px;width:328.00px;height:1.00px;background:#eeeeee;"></div>
<div class="t" style="left:659.40px;top:248.32px;font-size:11.2px;line-height:11.2px;color:#3a3a3a;font-weight:normal;-webkit-text-stroke:0.45px #3a3a3a;letter-spacing:0.1px;">Histogram</div>
<svg class="r" style="left:662.00px;top:271.20px;" width="14" height="14" viewBox="0 0 14 14"><circle cx="6" cy="6.6" r="4.5" fill="none" stroke="#444" stroke-width="1.1"/><path d="M9.2,9.8 L12.2,12.8" stroke="#444" stroke-width="1.2"/></svg>
<div class="t" style="left:678.40px;top:273.12px;font-size:11.2px;line-height:11.2px;color:#444;font-weight:normal;">ranges</div>
<div class="t" style="left:941.50px;top:272.87px;font-size:11.5px;line-height:11.5px;color:#444;font-weight:normal;letter-spacing:0.2px;">count</div>
<svg class="r" style="left:717.50px;top:273.50px;" width="7" height="11" viewBox="0 0 7 11"><path d="M0.5,4.3 L3.2,0.8 L5.9,4.3 Z" fill="#999"/><path d="M0.5,6.2 L3.2,9.7 L5.9,6.2 Z" fill="#222"/></svg>
<svg class="r" style="left:976.00px;top:273.50px;" width="7" height="11" viewBox="0 0 7 11"><path d="M0.5,4.3 L3.2,0.8 L5.9,4.3 Z" fill="#999"/><path d="M0.5,6.2 L3.2,9.7 L5.9,6.2 Z" fill="#222"/></svg>
<div class="r" style="left:667.70px;top:291.60px;width:312.62px;height:14.20px;background:#86c6ec;"></div>
<div class="t" style="left:673.20px;top:292.66px;font-size:10.8px;line-height:10.8px;color:#36495a;font-weight:normal;letter-spacing:-0.15px;">0.03 - 0.06</div>
<div class="t" style="right:48.50px;top:293.54px;font-size:10.7px;line-height:10.7px;color:#444;font-weight:normal;">14</div>
<div class="r" style="left:667.70px;top:308.70px;width:290.29px;height:14.20px;background:#86c6ec;"></div>
<div class="t" style="left:673.20px;top:309.76px;font-size:10.8px;line-height:10.8px;color:#36495a;font-weight:normal;letter-spacing:-0.15px;">0.12 - 0.15</div>
<div class="t" style="right:48.50px;top:310.64px;font-size:10.7px;line-height:10.7px;color:#444;font-weight:normal;">13</div>
<div class="r" style="left:667.70px;top:325.80px;width:267.96px;height:14.20px;background:#86c6ec;"></div>
<div class="t" style="left:673.20px;top:326.86px;font-size:10.8px;line-height:10.8px;color:#36495a;font-weight:normal;letter-spacing:-0.15px;">0.09 - 0.12</div>
<div class="t" style="right:48.50px;top:327.74px;font-size:10.7px;line-height:10.7px;color:#444;font-weight:normal;">12</div>
<div class="r" style="left:667.70px;top:342.90px;width:245.63px;height:14.20px;background:#86c6ec;"></div>
<div class="t" style="left:673.20px;top:343.96px;font-size:10.8px;line-height:10.8px;color:#36495a;font-weight:normal;letter-spacing:-0.15px;">0.27 - 0.3</div>
<div class="t" style="right:48.50px;top:344.84px;font-size:10.7px;line-height:10.7px;color:#444;font-weight:normal;">11</div>
<div class="r" style="left:667.70px;top:360.00px;width:223.30px;height:14.20px;background:#86c6ec;"></div>
<div class="t" style="left:673.20px;top:361.06px;font-size:10.8px;line-height:10.8px;color:#36495a;font-weight:normal;letter-spacing:-0.15px;">0.18 - 0.21</div>
<div class="t" style="right:48.50px;top:361.94px;font-size:10.7px;line-height:10.7px;color:#444;font-weight:normal;">10</div>
<div class="r" style="left:667.70px;top:377.10px;width:178.64px;height:14.20px;background:#86c6ec;"></div>
<div class="t" style="left:673.20px;top:378.16px;font-size:10.8px;line-height:10.8px;color:#36495a;font-weight:normal;letter-spacing:-0.15px;">0 - 0.03</div>
<div class="t" style="right:48.50px;top:379.04px;font-size:10.7px;line-height:10.7px;color:#444;font-weight:normal;">8</div>
<div class="r" style="left:667.70px;top:394.20px;width:156.31px;height:14.20px;background:#86c6ec;"></div>
<div class="t" style="left:673.20px;top:395.26px;font-size:10.8px;line-height:10.8px;color:#36495a;font-weight:normal;letter-spacing:-0.15px;">0.06 - 0.09</div>
<div class="t" style="right:48.50px;top:396.14px;font-size:10.7px;line-height:10.7px;color:#444;font-weight:normal;">7</div>
<div class="r" style="left:667.70px;top:411.30px;width:156.31px;height:14.20px;background:#86c6ec;"></div>
<div class="t" style="left:673.20px;top:412.36px;font-size:10.8px;line-height:10.8px;color:#36495a;font-weight:normal;letter-spacing:-0.15px;">0.15 - 0.18</div>
<div class="t" style="right:48.50px;top:413.24px;font-size:10.7px;line-height:10.7px;color:#444;font-weight:normal;">7</div>
<div class="r" style="left:667.70px;top:428.40px;width:156.31px;height:14.20px;background:#86c6ec;"></div>
<div class="t" style="left:673.20px;top:429.46px;font-size:10.8px;line-height:10.8px;color:#36495a;font-weight:normal;letter-spacing:-0.15px;">0.21 - 0.24</div>
<div class="t" style="right:48.50px;top:430.34px;font-size:10.7px;line-height:10.7px;color:#444;font-weight:normal;">7</div>
<div class="r" style="left:667.70px;top:445.50px;width:133.98px;height:14.20px;background:#86c6ec;"></div>
<div class="t" style="left:673.20px;top:446.56px;font-size:10.8px;line-height:10.8px;color:#36495a;font-weight:normal;letter-spacing:-0.15px;">0.24 - 0.27</div>
<div class="t" style="right:48.50px;top:447.44px;font-size:10.7px;line-height:10.7px;color:#444;font-weight:normal;">6</div>
<div class="r" style="left:667.70px;top:462.60px;width:111.65px;height:14.20px;background:#86c6ec;"></div>
<div class="t" style="left:673.20px;top:463.66px;font-size:10.8px;line-height:10.8px;color:#36495a;font-weight:normal;letter-spacing:-0.15px;">0.3 - 0.33</div>
<div class="t" style="right:48.50px;top:464.54px;font-size:10.7px;line-height:10.7px;color:#444;font-weight:normal;">5</div>
<div class="r" style="left:660.00px;top:495.00px;width:330.00px;height:1.00px;background:#f0f0f0;"></div>
<div class="r" style="left:0.00px;top:502.00px;width:1024.00px;height:3.00px;background:#d9d9d9;"></div>
<div class="r" style="left:0.00px;top:502.00px;width:878.00px;height:2.60px;background:#a9a9a9;"></div>
<div class="r" style="left:0.00px;top:505.00px;width:1024.00px;height:24.00px;background:#fff;"></div>
<div class="r" style="left:0.00px;top:504.60px;width:1024.00px;height:2.80px;background:#eeeeee;"></div>
<div class="r" style="left:0.00px;top:529.00px;width:1024.00px;height:3.00px;background:#dfe5ef;"></div>
<div class="t" style="left:-1.00px;top:521.73px;font-size:8px;line-height:8px;color:#888;font-weight:normal;">els</div>
<svg class="r" style="left:57.00px;top:510.00px;" width="14" height="13" viewBox="0 0 14 13"><circle cx="7" cy="3.4" r="2.8" fill="#888"/><path d="M2,12 V9.5 Q2,6.8 5,6.8 H9 Q12,6.8 12,9.5 V12 Z" fill="#888"/></svg>
<div class="t" style="left:44.20px;width:40px;text-align:center;top:521.87px;font-size:7.6px;line-height:7.6px;color:#888;font-weight:normal;letter-spacing:-0.2px;">Contacts</div>
<div class="r" style="left:96.00px;top:506.00px;width:1.00px;height:23.00px;background:#e8e8e8;"></div>
<div class="t" style="left:104.50px;top:514.90px;font-size:9.8px;line-height:9.8px;color:#aaa;font-weight:normal;letter-spacing:-0.25px;">Here is your Smart Chat (Ctrl+Space)</div>
<div class="r" style="left:700.80px;top:507.00px;width:1.00px;height:22.00px;background:#ececec;"></div>
<div class="r" style="left:737.80px;top:507.00px;width:1.00px;height:22.00px;background:#ececec;"></div>
<div class="r" style="left:774.70px;top:507.00px;width:1.00px;height:22.00px;background:#ececec;"></div>
<div class="r" style="left:821.60px;top:507.00px;width:1.00px;height:22.00px;background:#ececec;"></div>
<div class="r" style="left:858.50px;top:507.00px;width:1.00px;height:22.00px;background:#ececec;"></div>
<div class="r" style="left:895.50px;top:507.00px;width:1.00px;height:22.00px;background:#ececec;"></div>
<div class="r" style="left:933.30px;top:507.00px;width:1.00px;height:22.00px;background:#ececec;"></div>
<div class="r" style="left:970.60px;top:507.00px;width:1.00px;height:22.00px;background:#ececec;"></div>
<div class="r" style="left:1007.20px;top:507.00px;width:1.00px;height:22.00px;background:#ececec;"></div>
<svg class="r" style="left:711.00px;top:511.00px;" width="16" height="15" viewBox="0 0 16 15"><path d="M7,12 H2 V1.5 H12 V6" fill="none" stroke="#888" stroke-width="1.1"/><path d="M4,4.5 L6,6 L4,7.5" fill="none" stroke="#888" stroke-width="1"/><circle cx="11.5" cy="10.5" r="3.3" fill="#888"/><path d="M10.5,9 L13,10.5 L10.5,12 Z" fill="#fff"/></svg>
<svg class="r" style="left:749.00px;top:511.00px;" width="15" height="15" viewBox="0 0 15 15"><path d="M7,2 H1.5 V12.5 H12 V7" fill="none" stroke="#888" stroke-width="1.2"/><path d="M5.5,9 L6,6.5 L11.5,1 L13.5,3 L8,8.5 Z" fill="none" stroke="#888" stroke-width="1.1"/></svg>
<div class="t" style="left:772.80px;width:50px;text-align:center;top:513.33px;font-size:10px;line-height:10px;color:#808080;font-weight:normal;letter-spacing:-0.3px;-webkit-text-stroke:0.25px #808080;">Ask Zia</div>
<svg class="r" style="left:833.00px;top:511.00px;" width="15" height="14" viewBox="0 0 15 14"><path d="M1,3.5 H5.5 L1.5,10.5 H6" fill="none" stroke="#888" stroke-width="1"/><path d="M7,5 V10.5" stroke="#888" stroke-width="1"/><path d="M8.5,10.5 L11,3.5 L13.8,10.5 Z" fill="none" stroke="#888" stroke-width="1"/><path d="M5,1.5 Q9,0 12,2" fill="none" stroke="#888" stroke-width="0.8"/></svg>
<svg class="r" style="left:871.00px;top:510.00px;" width="13" height="16" viewBox="0 0 13 16"><path d="M1.5,1.5 H8 L11.5,5 V14.5 H1.5 Z" fill="none" stroke="#888" stroke-width="1.1"/><path d="M3.8,9.5 H9 M3.8,11.8 H9" stroke="#888" stroke-width="0.9"/></svg>
<svg class="r" style="left:907.00px;top:511.00px;" width="15" height="14" viewBox="0 0 15 14"><rect x="1" y="1.5" width="13" height="9" fill="none" stroke="#888" stroke-width="1.1"/><circle cx="7.5" cy="4.6" r="1.3" fill="#888"/><path d="M5.2,9 Q7.5,5.5 9.8,9 Z" fill="#888"/><path d="M3,12.5 H12" stroke="#888" stroke-width="1"/></svg>
<svg class="r" style="left:945.00px;top:510.00px;" width="14" height="15" viewBox="0 0 14 15"><circle cx="7" cy="8.3" r="5" fill="none" stroke="#888" stroke-width="1.1"/><path d="M7,5.5 V8.5 H9.5" fill="none" stroke="#888" stroke-width="1"/><path d="M1.5,4 L4,1.5 M12.5,4 L10,1.5 M3,13.5 L4.2,12.3 M11,13.5 L9.8,12.3" stroke="#888" stroke-width="1"/></svg>
<svg class="r" style="left:981.50px;top:511.00px;" width="15" height="14" viewBox="0 0 15 14"><path d="M1,5.2 H3.8 L9.4,2.8 V11.4 L3.8,9.2 H1 Z" fill="#eee" stroke="#888" stroke-width="1.1"/><path d="M9.4,2.8 V11.4" stroke="#888" stroke-width="1.6"/><path d="M2.5,9.2 V11.2" stroke="#888" stroke-width="1"/><path d="M11.6,4.2 L13,3.2 M11.6,7.1 H13.3 M11.6,10 L13,11" stroke="#888" stroke-width="0.9"/></svg>
<svg class="r" style="left:1012.00px;top:510.00px;" width="14" height="15" viewBox="0 0 14 15"><path d="M1.5,5 Q1.5,13.5 6,13.8 H11 Q13.5,13.5 13.5,5" fill="none" stroke="#888" stroke-width="1.3"/><path d="M1.5,5 L4,3 H12" fill="none" stroke="#888" stroke-width="1.1"/><rect x="4.5" y="6.5" width="6" height="5" fill="none" stroke="#888" stroke-width="0.9"/></svg>
</body></html>
